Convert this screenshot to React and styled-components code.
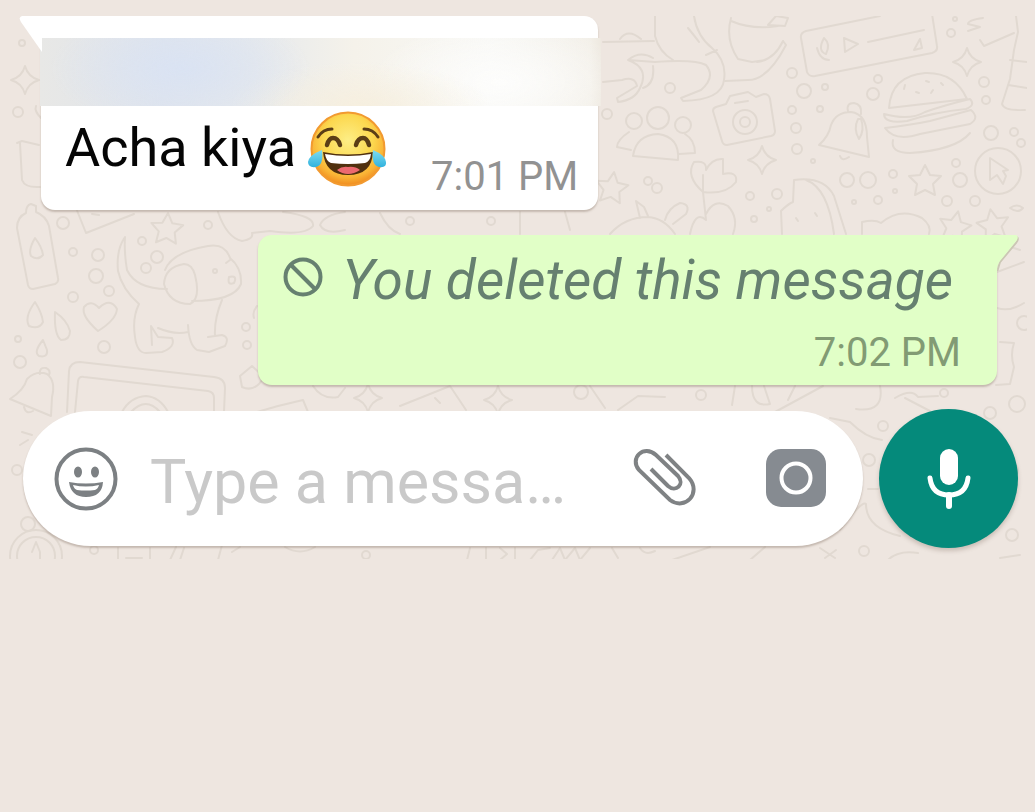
import React from "react";
import styled, { createGlobalStyle } from "styled-components";

const GlobalStyle = createGlobalStyle`
  * { box-sizing: border-box; }
  body {
    margin: 0;
    background: #eee6e0;
    font-family: Roboto, "Liberation Sans", sans-serif;
  }
`;

const Chat = styled.main`
  position: relative;
  display: flex;
  flex-direction: column;
  padding: 16px 17px 12px 23px;
`;

const Wallpaper = styled.svg`
  position: absolute;
  inset: 0;
  width: 100%;
  height: 100%;
  fill: none;
  stroke: #e1d9d1;
  stroke-width: 2;
  stroke-linecap: round;
  stroke-linejoin: round;
`;

const Bubble = styled.article`
  position: relative;
  display: flex;
  flex-direction: column;
  width: fit-content;
  align-self: ${(p) => (p.$outgoing ? "flex-end" : "flex-start")};
  margin: ${(p) => (p.$outgoing ? "0 21px 24px 0" : "0 0 25px 18px")};
  padding: ${(p) => (p.$outgoing ? "13px 36px 8px 24px" : "22px 20px 9px 24px")};
  background: ${(p) => (p.$outgoing ? "#e1ffc7" : "#ffffff")};
  border-radius: ${(p) => (p.$outgoing ? "14px 0 14px 14px" : "0 14px 14px 14px")};
  box-shadow: 0 2px 2px rgba(120, 100, 85, 0.35);
`;

const Tail = styled.svg`
  position: absolute;
  top: 0;
  ${(p) => (p.$outgoing ? "left: calc(100% - 1px)" : "right: calc(100% - 1px)")};
  width: 23px;
  height: 36px;
`;

const HiddenName = styled.div`
  height: 68px;
  margin: 0 -23px 0 -25px;
  background:
    radial-gradient(ellipse 130px 60px at 25% 45%, #dae3f3 0%, rgba(218, 227, 243, 0) 100%),
    radial-gradient(ellipse 130px 44px at 57% 100%, #f6efdf 0%, rgba(246, 239, 223, 0) 100%),
    radial-gradient(ellipse 130px 60px at 82% 65%, #fdfdfc 0%, rgba(253, 253, 252, 0) 100%),
    linear-gradient(90deg, #e8e8e6 0%, #dfe4ec 22%, #e6e9ec 38%, #f5f2ea 56%, #f8f8f5 80%, #f3f0e9 98%, #eee9e0 100%);
`;

const MessageRow = styled.div`
  display: flex;
  align-items: flex-start;
  height: 95px;
`;

const Text = styled.p`
  margin: 0;
  font-size: 54px;
  line-height: 64px;
  white-space: nowrap;
  color: #050505;
`;

const IncomingText = styled(Text)`
  padding-top: 10px;
`;

const Emoji = styled.svg`
  width: 80px;
  height: 80px;
  margin: 3px 0 0 11px;
`;

const Time = styled.time`
  align-self: flex-end;
  font-size: 40px;
  line-height: 48px;
  white-space: nowrap;
  color: ${(p) => (p.$outgoing ? "#829b74" : "#929292")};
`;

const InlineTime = styled(Time)`
  margin-left: 44px;
`;

const DeletedRow = styled.div`
  display: flex;
  align-items: flex-start;
  gap: 18px;
  margin-right: 8px;
  margin-bottom: 17px;
`;

const BlockIcon = styled.svg`
  flex: none;
  width: 42px;
  height: 42px;
  margin-top: 8px;
`;

const DeletedText = styled(Text)`
  font-size: 55px;
  font-style: italic;
  color: #668070;
`;

const Composer = styled.form`
  position: relative;
  display: flex;
  align-items: center;
  gap: 16px;
`;

const Field = styled.div`
  display: flex;
  flex: 1;
  align-items: center;
  min-width: 0;
  height: 135px;
  padding: 0 34px 0 30px;
  border-radius: 68px;
  background: #ffffff;
  box-shadow: 0 2px 2px rgba(120, 100, 85, 0.35);
`;

const MessageInput = styled.input`
  flex: 1;
  min-width: 0;
  height: 80px;
  margin: 0 24px 0 31px;
  padding: 6px 0 0;
  border: 0;
  outline: 0;
  background: transparent;
  font-family: inherit;
  font-size: 61px;
  color: #222222;
  text-overflow: ellipsis;

  &::placeholder {
    color: #c9c9c9;
    opacity: 1;
  }
`;

const IconButton = styled.button`
  flex: none;
  display: grid;
  place-items: center;
  width: 66px;
  height: 66px;
  padding: 0;
  border: 0;
  background: transparent;
  cursor: pointer;

  svg { display: block; }
`;

const CameraButton = styled(IconButton)`
  margin-left: 66px;
`;

const MicButton = styled(IconButton)`
  width: 139px;
  height: 139px;
  border-radius: 50%;
  background: #058a7b;
  box-shadow: 0 3px 4px rgba(120, 100, 85, 0.3);
`;

const STARS = [[925, 180, 0], [612, 187, 8], [167, 228, 4], [955, 226, 12], [993, 224, -10]];
const SPARKLES = [[967, 62], [762, 160], [25, 80], [368, 398], [498, 400]];
const DOTS = [
  [792, 73, 5], [804, 91, 7], [825, 87, 3], [873, 94, 6], [878, 79, 4], [984, 82, 5], [986, 100, 4],
  [792, 110, 4], [796, 128, 5], [797, 149, 5], [820, 109, 3], [847, 180, 7], [868, 180, 8], [893, 174, 4],
  [895, 191, 2], [956, 163, 4], [960, 180, 7], [991, 133, 7], [1014, 132, 4], [1021, 143, 4], [947, 201, 5],
  [975, 201, 5], [854, 202, 2], [878, 200, 4], [750, 196, 4], [777, 194, 5], [754, 219, 3], [769, 209, 2],
  [951, 33, 4], [955, 19, 2], [813, 161, 2], [670, 88, 5], [648, 181, 4], [657, 188, 5], [607, 114, 5],
  [63, 223, 6], [73, 252, 4], [98, 255, 6], [96, 276, 7], [109, 291, 5], [73, 297, 5], [142, 241, 4],
  [157, 257, 6], [146, 268, 5], [104, 347, 6], [20, 362, 6], [246, 327, 4], [247, 345, 4], [208, 225, 4],
  [22, 43, 3], [18, 112, 5], [18, 339, 3], [581, 392, 7], [701, 395, 5], [944, 393, 4], [1017, 404, 8],
  [990, 413, 6], [883, 426, 5], [1024, 323, 7], [1012, 535, 6], [864, 551, 5], [366, 555, 4], [94, 550, 4],
  [17, 470, 5], [28, 524, 7], [869, 460, 6], [1012, 470, 6], [410, 221, 4], [491, 221, 4],
];

function Doodles() {
  return (
    <Wallpaper viewBox="0 0 1035 560" preserveAspectRatio="xMidYMin slice" aria-hidden="true">
      <defs>
        <clipPath id="wall"><rect x="8" y="16" width="1019" height="543" /></clipPath>
      </defs>
      <g clipPath="url(#wall)">
        {DOTS.map(([x, y, r]) => <circle key={`${x}-${y}`} cx={x} cy={y} r={r} />)}
        {STARS.map(([x, y, a]) => (
          <path key={`${x}-${y}`} transform={`translate(${x} ${y}) rotate(${a})`}
            d="M0-15 5-5 16-4 8 4 10 15 0 10-10 15-8 4-16-4-5-5Z" />
        ))}
        {SPARKLES.map(([x, y]) => (
          <path key={`${x}-${y}`} transform={`translate(${x} ${y})`}
            d="M0-14Q3-3 14 0 3 3 0 14-3 3-14 0-3-3 0-14Z" />
        ))}
        {/* voice message card */}
        <path d="M880 16 806 31Q800 33 801 38L807 72Q809 77 815 76L932 53Q938 51 937 46L932 14" />
        <path d="M824 38Q831 44 826 54 817 51 824 38ZM817 48Q820 60 829 60M844 38 858 44 845 52ZM868 42 924 30M914 50 920 39 922 48Z" />
        {/* hand and tea cup */}
        <path d="M731 18Q725 40 738 59L752 62 765 60M731 21Q752 30 778 26M768 25 776 16 788 18 785 26ZM783 41Q774 60 757 62M783 41 786 45Q768 80 748 80L725 81" />
        {/* octopus */}
        <path d="M655 16V36Q659 52 673 60M694 16Q697 36 712 48 727 61 724 80 722 100 683 101L681 98 701 90Q716 77 706 65 695 59 655 62L628 60Q640 50 653 58M653 66Q655 84 643 88M628 60Q650 68 640 88 635 100 618 102L617 98 637 86Q635 76 622 80L603 82M603 42 654 41M620 39Q628 28 641 39M688 28Q697 39 699 42M706 55 717 50" />
        {/* group of people */}
        <circle cx="658" cy="118" r="11" /><circle cx="634" cy="121" r="8" /><circle cx="683" cy="125" r="8" />
        <path d="M633 156Q636 135 658 134 680 137 678 160ZM629 132Q617 140 617 147L631 150M685 134Q695 140 695 153L679 154" />
        {/* photo camera */}
        <path d="M716 107 726 104 730 96 748 92 756 97 764 94Q769 94 770 99L775 131Q775 135 771 136L727 145Q723 145 722 141L713 111Q713 108 716 107Z" />
        <circle cx="745" cy="122" r="12" /><circle cx="745" cy="122" r="5" />
        <path d="M735 103 748 101" />
        {/* leaves */}
        <path d="M703 192Q685 176 694 162 707 160 706 170 712 158 723 159L723 174Q738 171 736 182 726 195 703 192ZM703 192 706 220M703 192V175M706 214Q714 198 728 206 739 218 733 234M706 220Q695 210 690 234" />
        {/* bell */}
        <path d="M819 145Q829 136 831 125 836 112 851 112 867 114 867 137L869 157ZM848 111Q846 103 854 103 862 104 861 114M840 156Q842 162 849 157M858 119Q853 129 859 139 865 130 861 119Z" />
        {/* burger */}
        <path d="M889 108Q891 76 925 73 955 72 967 99ZM884 114Q910 121 925 112 945 105 970 99 976 105 966 109 935 112 907 121 884 124 884 114ZM885 128Q910 125 930 121L971 110Q980 118 970 124L920 134Q895 142 885 128ZM893 140Q890 153 910 153 956 150 970 133M905 85 904 89M916 92 919 93M933 90 931 93M926 81 929 82M941 83 943 85" />
        {/* cursor badge */}
        <circle cx="998" cy="171" r="23" />
        <path d="M990 158V180L997 175 1003 184 1006 176 1003 171 1008 170ZM1010 160" />
        {/* popsicle */}
        <path d="M782 234 781 211Q788 204 793 202L794 180Q824 176 834 196L846 234M806 180Q828 188 834 234M796 218 798 221M815 213 817 216" />
        {/* cloud, giraffe */}
        <path d="M862 234V222Q875 219 881 223 900 207 922 218 932 226 929 234" />
        <path d="M1016 16 1018 32 1014 50 1010 79 1002 104Q1004 111 1025 110M1010 60 1027 62M1008 85 1027 88M968 31 980 27 968 24Q968 20 983 18M1014 33 984 46 980 40" />
        <path d="M1010 208Q1017 203 1023 208 1018 214 1010 208Z" />
        {/* crab */}
        <path d="M610 234Q625 217 648 217 664 218 675 234M640 218 636 201 644 207 648 216M665 220Q668 208 680 203 691 204 686 214L673 224" />
        {/* jug and bottle */}
        <path d="M17 143 22 141 39 145M20 143 22 180Q25 188 40 187M41 118Q34 111 36 106" />
        <path d="M26 213Q26 205 31 204L36 206V212Q46 216 49 226L58 278Q59 282 55 284L33 289Q29 289 28 285L17 228Q17 217 26 213ZM35 238Q28 250 31 256 38 261 43 255 42 247 35 238Z" />
        {/* envelope and shapes behind the first bubble */}
        <path d="M76 208 86 233 134 214M92 214 99 215M218 212Q227 238 242 241 254 239 252 233L270 231Q305 236 313 226 315 216 283 212M345 212Q324 215 320 225 325 235 345 230M380 213Q388 230 400 234M520 212V234M565 212 570 230" />
        {/* dog */}
        <path d="M165 270Q172 252 208 246 225 243 230 258 242 268 241 284 234 301 192 301M184 264Q165 267 164 284 169 304 190 304 201 299 195 275 192 264 184 264ZM167 289Q136 289 127 270 124 252 125 237 116 250 118 271 122 289 139 304 132 318 135 337 137 353 146 353L162 352Q176 347 172 338L158 337 151 326 152 345M158 328Q174 335 188 332M188 325Q189 345 197 350L209 352 225 346Q230 337 222 335L208 337M222 300Q214 319 215 336" />
        <circle cx="215" cy="271" r="2" /><path d="M229 277Q238 275 234 283 227 286 229 277ZM226 263 230 260" />
        {/* drops and heart */}
        <path d="M35 302Q24 317 29 326 39 330 43 322 42 313 35 302ZM55 312Q54 335 61 340 70 340 70 331 67 320 55 312ZM43 340Q33 352 39 356 48 358 47 350ZM98 331Q81 316 84 307 91 299 99 308 110 297 117 309 116 320 98 331Z" />
        {/* bell and tablet */}
        <path d="M10 399Q24 390 27 379 36 370 47 374 56 381 52 397L51 416ZM40 374Q39 367 46 368 51 370 49 375M24 407Q26 415 33 411" />
        <path d="M67 412 69 371Q70 362 80 362L214 377Q225 378 225 388L224 412M75 412 78 381Q79 376 84 377L208 391Q214 392 214 398V412M122 412Q130 397 146 396 160 397 168 412M131 412Q146 396 160 412" />
        {/* outlines between the second bubble and the field */}
        <path d="M240 376 252 366 264 377Q255 393 242 387ZM313 386Q322 400 338 397L345 388M257 412 278 406 303 400 308 412M400 406 450 386 466 410M435 398 440 403M590 386 605 408M618 410 638 396 665 397M735 386 732 405M752 386Q752 408 770 404L764 386M775 412 823 386M788 400 795 386M856 409Q885 413 880 386M895 398Q912 388 918 397L938 396M905 398 930 411" />
        {/* outlines right of the second bubble */}
        <path d="M997 272 1024 262M997 308Q1010 312 1024 303M1000 342 1014 343Q1010 355 1014 367L1010 384 996 385M1002 244 1020 250M257 306Q252 312 254 318" />
        {/* outlines around and under the field */}
        <path d="M830 418 850 422Q866 438 882 440M840 530Q862 500 866 504 866 528 900 536M22 432 32 435M20 445 28 440M868 489H878" />
        <circle cx="36" cy="556" r="26" /><circle cx="36" cy="556" r="19" />
        <path d="M32 552 36 542 40 552V560M118 560V548M150 548V560M170 560 176 547M184 548 180 560M218 560 222 545M232 552 240 547M285 547Q300 556 315 547M470 548 467 560M486 548V560M500 548 507 554 500 560M515 548V560M530 560 538 550 550 548M552 560 560 548 565 560 575 548 580 560 590 548M612 548 618 558M640 548Q645 556 655 551M672 560 710 547M750 560 765 547M820 548 835 558M825 558 836 550M888 560Q898 550 918 553M1000 558 1020 555M126 558H142" />
      </g>
    </Wallpaper>
  );
}

function JoyEmoji() {
  return (
    <Emoji viewBox="0 0 80 80" role="img" aria-label="Face with tears of joy">
      <defs>
        <radialGradient id="face" cx="50%" cy="38%" r="62%">
          <stop offset="0" stopColor="#fdee86" />
          <stop offset="0.55" stopColor="#fcd84f" />
          <stop offset="0.82" stopColor="#f9b436" />
          <stop offset="1" stopColor="#f08a1e" />
        </radialGradient>
        <linearGradient id="tear" x1="0" y1="0" x2="0" y2="1">
          <stop offset="0" stopColor="#7edcf2" />
          <stop offset="1" stopColor="#32b2dd" />
        </linearGradient>
      </defs>
      <circle cx="41" cy="40" r="36.5" fill="url(#face)" stroke="#f29a30" strokeWidth="2" />
      <g fill="none" stroke="#5b3e16" strokeLinecap="round">
        <path d="M11 28Q16 20 25 20M71 28Q66 20 57 20" strokeWidth="3" />
        <path d="M20 36Q22 29 26 29 31 29 33 36M49 36Q51 29 56 29 60 29 62 36" strokeWidth="4.5" />
      </g>
      <path d="M16 43Q41 48 66 43 65 66 41 66 18 66 16 43Z" fill="#50300f" />
      <path d="M18 45Q41 49 64 45 63 53 58 54 41 56 24 54 19 52 18 45Z" fill="#fff" />
      <path d="M30 61Q35 57 41 58 48 57 53 61 47 65 41 65 35 65 30 61Z" fill="#ec6a70" />
      <path d="M15 41Q17 56 9 58 1 59 1 53 2 46 15 41ZM66 41Q64 56 72 58 80 59 79 53 78 46 66 41Z" fill="url(#tear)" />
    </Emoji>
  );
}

export default function App() {
  return (
    <>
      <GlobalStyle />
      <Chat>
        <Doodles />
        <Bubble>
          <Tail viewBox="0 0 23 36" aria-hidden="true">
            <path d="M3 0H23V36L2 6Q-1 1 3 0Z" fill="#fff" />
          </Tail>
          <HiddenName />
          <MessageRow>
            <IncomingText>Acha kiya</IncomingText>
            <JoyEmoji />
            <InlineTime dateTime="19:01">7:01 PM</InlineTime>
          </MessageRow>
        </Bubble>

        <Bubble $outgoing>
          <Tail $outgoing viewBox="0 0 23 36" aria-hidden="true">
            <path d="M21 2Q23 4 20 8L4 27 1 37" fill="none" stroke="#cbc7b4" strokeWidth="2" />
            <path d="M0 0H20Q23 1 21 5L4 26Q1 30 1 36H0Z" fill="#e1ffc7" />
          </Tail>
          <DeletedRow>
            <BlockIcon viewBox="0 0 42 42" aria-hidden="true">
              <circle cx="21" cy="21" r="17.5" fill="none" stroke="#668070" strokeWidth="4" />
              <path d="M9 9 33 33" stroke="#668070" strokeWidth="4" />
            </BlockIcon>
            <DeletedText>You deleted this message</DeletedText>
          </DeletedRow>
          <Time $outgoing dateTime="19:02">7:02 PM</Time>
        </Bubble>

        <Composer onSubmit={(e) => e.preventDefault()}>
          <Field>
            <IconButton type="button" aria-label="Emoji">
              <svg width="66" height="66" viewBox="0 0 66 66" aria-hidden="true">
                <circle cx="33" cy="33" r="29.5" fill="none" stroke="#7c8083" strokeWidth="4" />
                <ellipse cx="25" cy="26" rx="4" ry="5.5" fill="#7c8083" />
                <ellipse cx="42" cy="26" rx="4" ry="5.5" fill="#7c8083" />
                <path d="M16 36Q33 39 50 36 49 51 33 51 18 51 16 36Z" fill="#7c8083" />
                <path d="M20 39Q33 42 46 39 45 43 42 44 33 45 24 44 21 43 20 39Z" fill="#fff" />
              </svg>
            </IconButton>
            <MessageInput aria-label="Message" placeholder="Type a messa…" />
            <IconButton type="button" aria-label="Attach">
              <svg width="66" height="66" viewBox="0 0 66 66" fill="none" stroke="#7f8284" strokeWidth="4" strokeLinecap="butt" aria-hidden="true">
                <path d="M35 9 58 32C71 47 54 65 39 54L8 24C-2 12 13-2 25 9L47 30C54 38 45 47 37 40L20 23" />
              </svg>
            </IconButton>
            <CameraButton type="button" aria-label="Camera">
              <svg width="60" height="60" viewBox="0 0 60 60" aria-hidden="true">
                <rect x="0" y="0" width="60" height="58" rx="15" fill="#868b91" />
                <circle cx="30" cy="29" r="14.5" fill="none" stroke="#fff" strokeWidth="4" />
              </svg>
            </CameraButton>
          </Field>
          <MicButton type="button" aria-label="Record voice message">
            <svg width="44" height="62" viewBox="0 0 44 62" aria-hidden="true">
              <rect x="13" y="1" width="18" height="36" rx="9" fill="#fff" />
              <path d="M3 30Q5 47 22 47 39 47 41 30" fill="none" stroke="#fff" strokeWidth="5" strokeLinecap="round" />
              <path d="M22 47V58" stroke="#fff" strokeWidth="6" strokeLinecap="round" />
            </svg>
          </MicButton>
        </Composer>
      </Chat>
    </>
  );
}
